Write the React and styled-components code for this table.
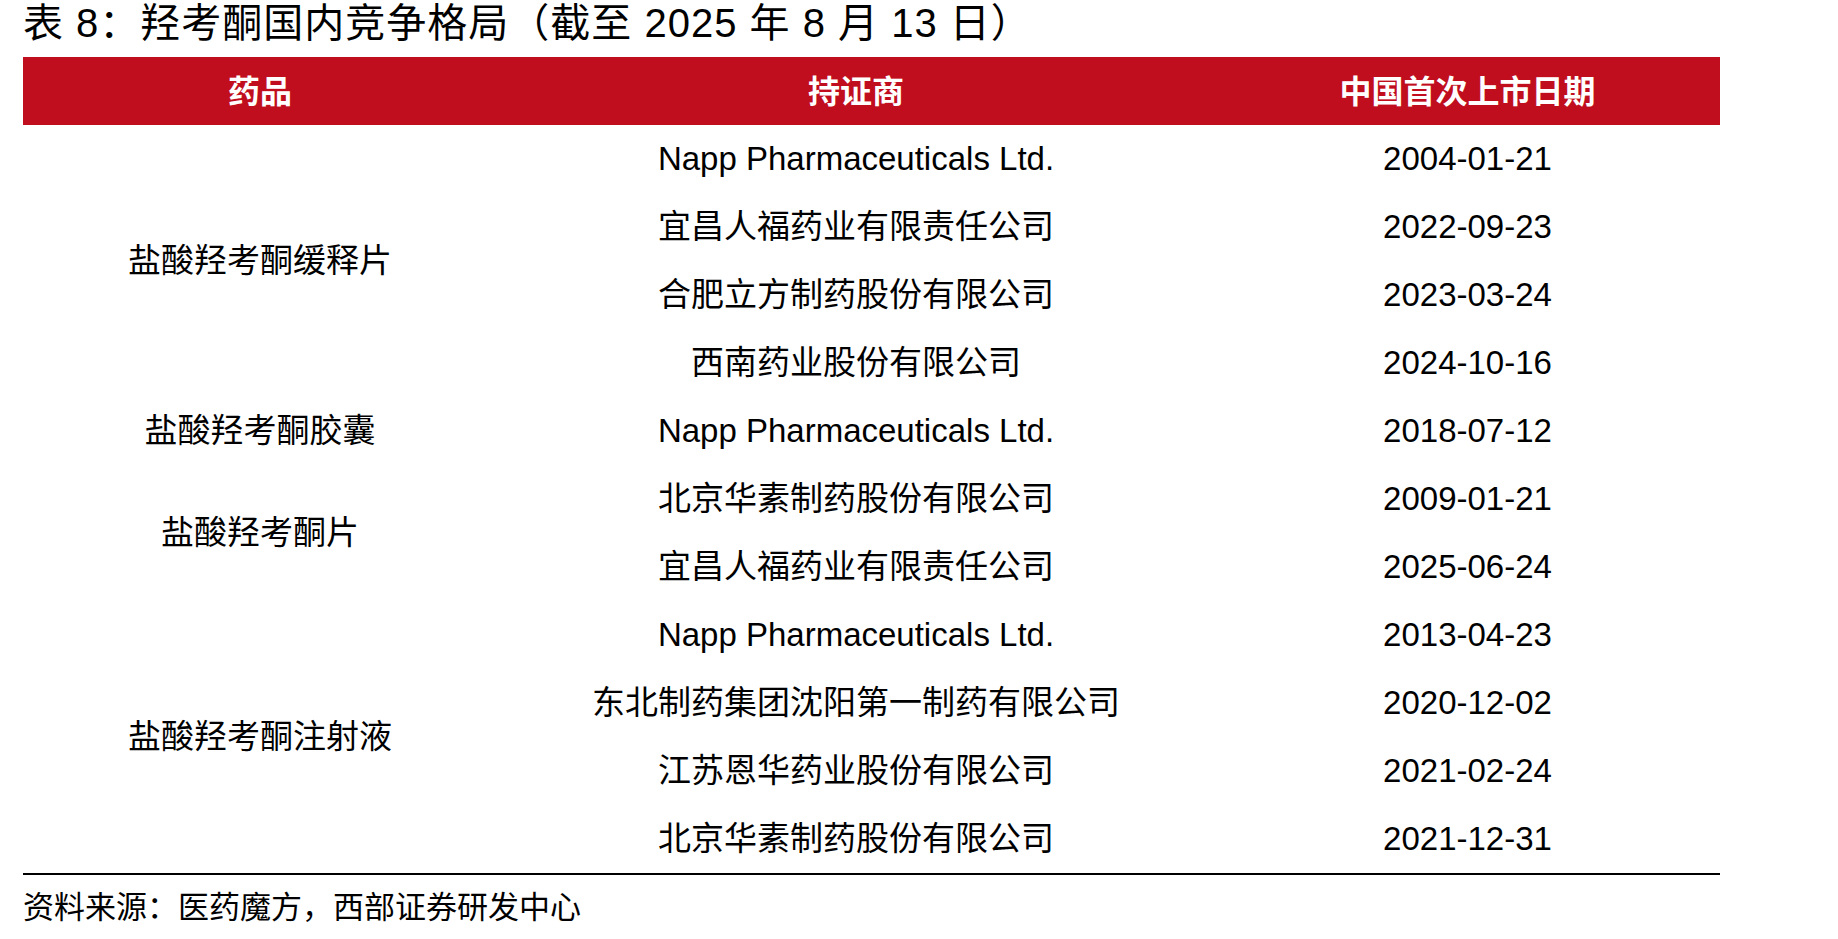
import React from 'react'
import styled, { createGlobalStyle } from 'styled-components'

const GlobalStyle = createGlobalStyle`
    html, body {
        margin: 0;
        padding: 0;
        background: #ffffff;
    }
    body {
        font-family: 'Liberation Sans', 'Noto Sans CJK SC', sans-serif;
        color: #000000;
    }
`

const Page = styled('div')({
    width: '1697px',
    padding: '0 0 0 23px',
    display: 'flex',
    flexDirection: 'column',
})

const Title = styled('h1')({
    margin: '0 0 11px 0',
    fontSize: '40px',
    lineHeight: '46px',
    fontWeight: 400,
    letterSpacing: '1px',
    whiteSpace: 'nowrap',
    fontFamily: "'Liberation Sans', 'Noto Sans CJK SC', sans-serif",
})

const Table = styled('table')({
    width: '1697px',
    borderCollapse: 'collapse',
    tableLayout: 'fixed',
    borderSpacing: 0,
})

const HeadCell = styled('th')({
    height: '68px',
    padding: '0 0 4px 0',
    boxSizing: 'border-box',
    backgroundColor: '#c00e1e',
    color: '#ffffff',
    fontSize: '32px',
    lineHeight: '40px',
    fontWeight: 700,
    textAlign: 'center',
    verticalAlign: 'middle',
    fontFamily: "'Noto Sans CJK SC', sans-serif",
})

const Cell = styled('td')({
    height: '68px',
    padding: 0,
    fontSize: '33px',
    lineHeight: '40px',
    textAlign: 'center',
    verticalAlign: 'middle',
    whiteSpace: 'nowrap',
    fontFamily: "'Liberation Sans', 'Noto Sans CJK SC', sans-serif",
})

const Rule = styled('div')({
    width: '1697px',
    height: '2px',
    backgroundColor: '#000000',
})

const Source = styled('p')({
    margin: '10px 0 0 0',
    fontSize: '31px',
    lineHeight: '40px',
    fontFamily: "'Noto Sans CJK SC', sans-serif",
})

const columns = [474, 718, 505]

const groups = [
    {
        drug: '盐酸羟考酮缓释片',
        rows: [
            ['Napp Pharmaceuticals Ltd.', '2004-01-21'],
            ['宜昌人福药业有限责任公司', '2022-09-23'],
            ['合肥立方制药股份有限公司', '2023-03-24'],
            ['西南药业股份有限公司', '2024-10-16'],
        ],
    },
    {
        drug: '盐酸羟考酮胶囊',
        rows: [['Napp Pharmaceuticals Ltd.', '2018-07-12']],
    },
    {
        drug: '盐酸羟考酮片',
        rows: [
            ['北京华素制药股份有限公司', '2009-01-21'],
            ['宜昌人福药业有限责任公司', '2025-06-24'],
        ],
    },
    {
        drug: '盐酸羟考酮注射液',
        rows: [
            ['Napp Pharmaceuticals Ltd.', '2013-04-23'],
            ['东北制药集团沈阳第一制药有限公司', '2020-12-02'],
            ['江苏恩华药业股份有限公司', '2021-02-24'],
            ['北京华素制药股份有限公司', '2021-12-31'],
        ],
    },
]

function App() {
    return (
        <>
            <GlobalStyle />
            <Page>
                <Title>表 8：羟考酮国内竞争格局（截至 2025 年 8 月 13 日）</Title>
                <Table>
                    <colgroup>
                        {columns.map((w, i) => (
                            <col key={i} style={{ width: `${w}px` }} />
                        ))}
                    </colgroup>
                    <thead>
                        <tr>
                            <HeadCell>药品</HeadCell>
                            <HeadCell>持证商</HeadCell>
                            <HeadCell>中国首次上市日期</HeadCell>
                        </tr>
                    </thead>
                    <tbody>
                        {groups.map((group) =>
                            group.rows.map((row, i) => (
                                <tr key={group.drug + i}>
                                    {i === 0 && (
                                        <Cell rowSpan={group.rows.length}>
                                            {group.drug}
                                        </Cell>
                                    )}
                                    <Cell>{row[0]}</Cell>
                                    <Cell>{row[1]}</Cell>
                                </tr>
                            ))
                        )}
                    </tbody>
                </Table>
                <Rule />
                <Source>资料来源：医药魔方，西部证券研发中心</Source>
            </Page>
        </>
    )
}

export default App
